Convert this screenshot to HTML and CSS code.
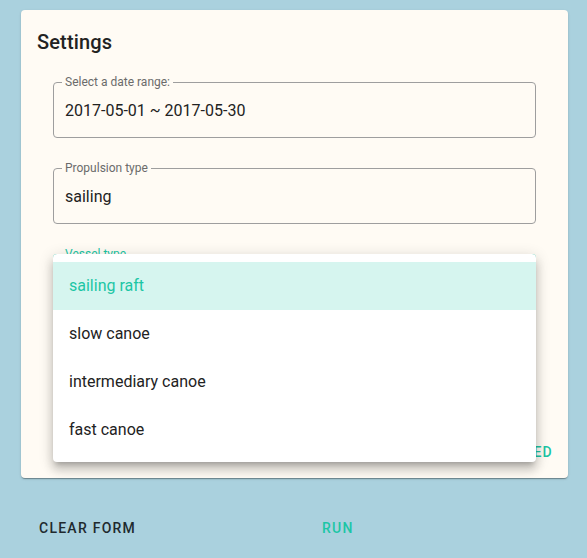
FILE: index.html
```html
<!DOCTYPE html>
<html>
<head>
<meta charset="utf-8">
<link rel="stylesheet" href="styles.css">
</head>
<body>
<div class="page">
  <div class="card">
    <h2 class="title">Settings</h2>
    <div class="fields">
      <div class="field">
        <span class="label">Select a date range:</span>
        <span class="value">2017-05-01 ~ 2017-05-30</span>
      </div>
      <div class="field">
        <span class="label">Propulsion type</span>
        <span class="value">sailing</span>
      </div>
      <div class="field focused">
        <span class="label">Vessel type</span>
        <span class="value"></span>
        <ul class="menu">
          <li class="item active">sailing raft</li>
          <li class="item">slow canoe</li>
          <li class="item">intermediary canoe</li>
          <li class="item">fast canoe</li>
        </ul>
      </div>
    </div>
    <div class="card-actions">
      <button class="btn teal">ADVANCED</button>
    </div>
  </div>
  <div class="actions">
    <button class="btn dark">CLEAR FORM</button>
    <button class="btn teal">RUN</button>
  </div>
</div>
</body>
</html>
```
FILE: styles.css
```css
html, body {
  margin: 0;
  padding: 0;
  background: #aad1de;
  font-family: Roboto, "Noto Sans", sans-serif;
  color: #222;
}
.page {
  width: 587px;
  height: 558px;
  padding: 10px 19px 0 21px;
  box-sizing: border-box;
}
.card {
  width: 547px;
  height: 468px;
  box-sizing: border-box;
  background: #fffbf4;
  border-radius: 4px;
  box-shadow: 0 2px 1px -1px rgba(0,0,0,0.2), 0 1px 1px rgba(0,0,0,0.14), 0 1px 3px rgba(0,0,0,0.12);
  padding: 16px 16px 0 16px;
  display: flex;
  flex-direction: column;
}
.title {
  margin: 0;
  font-size: 20px;
  font-weight: 500;
  line-height: 32px;
  letter-spacing: 0.15px;
  color: #222;
}
.fields {
  padding: 24px 16px 0 16px;
  display: flex;
  flex-direction: column;
  gap: 30px;
}
.field {
  position: relative;
  height: 56px;
  border: 1px solid #9e9e9e;
  border-radius: 4px;
  box-sizing: border-box;
  display: flex;
  align-items: center;
  padding: 0 11px;
}
.field.focused {
  border: 2px solid #1cc6a5;
}
.label {
  position: absolute;
  top: -8px;
  left: 8px;
  padding: 0 3px;
  font-size: 12px;
  line-height: 14px;
  color: #6b6b6b;
  background: #fffbf4;
}
.focused .label {
  color: #1cc6a5;
  top: -9px;
  left: 7px;
}
.value {
  font-size: 16px;
  color: #222;
}
.menu {
  position: absolute;
  top: -2px;
  left: -2px;
  width: 483px;
  margin: 0;
  padding: 8px 0;
  list-style: none;
  background: #fff;
  border-radius: 4px;
  box-shadow: 0 5px 5px -3px rgba(0,0,0,0.2), 0 8px 10px 1px rgba(0,0,0,0.14), 0 3px 14px 2px rgba(0,0,0,0.12);
  z-index: 5;
}
.item {
  height: 48px;
  line-height: 48px;
  padding: 0 16px;
  font-size: 16px;
  color: #222;
}
.item.active {
  background: #d6f5ef;
  color: #1cc6a5;
}
.card-actions {
  margin-top: auto;
  display: flex;
  justify-content: flex-end;
  padding: 0 0 8px 0;
  margin-right: -15px;
}
.btn {
  background: none;
  border: none;
  font-family: Roboto, "Noto Sans", sans-serif;
  font-size: 14px;
  font-weight: 500;
  letter-spacing: 1.25px;
  padding: 0 16px;
  height: 36px;
  cursor: pointer;
}
.card-actions .btn {
  padding-right: 0;
  margin-right: 14px;
}
.btn.teal {
  color: #1cc6a5;
}
.btn.dark {
  color: #1f2a2e;
}
.actions {
  display: grid;
  grid-template-columns: 283px 1fr;
  justify-items: start;
  padding: 32px 0 0 2px;
  margin-left: -21px;
  padding-left: 23px;
}
```
